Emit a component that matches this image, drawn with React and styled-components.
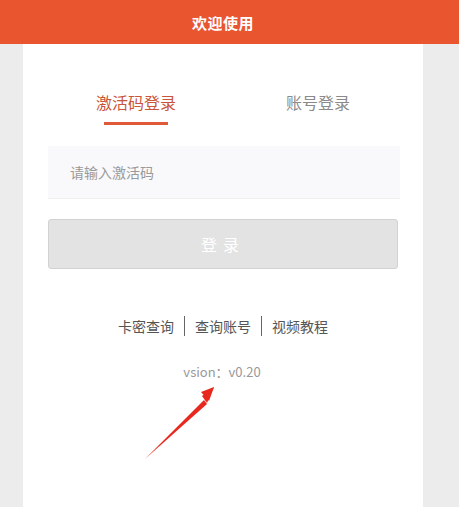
import React from 'react';
import styled, { createGlobalStyle } from 'styled-components';

const Global = createGlobalStyle`
  html, body {
    margin: 0;
    padding: 0;
    background: #ececec;
    font-family: "Noto Sans CJK SC", "Liberation Sans", sans-serif;
  }
`;

const Page = styled.div`
  width: 100%;
  height: 507px;
  display: flex;
  flex-direction: column;
  position: relative;
  overflow: hidden;
`;

const Header = styled.div`
  height: 44px;
  background: #e9552f;
  color: #fff;
  font-size: 15px;
  font-weight: bold;
  display: flex;
  align-items: center;
  justify-content: center;
  padding-right: 13px;
  letter-spacing: 0.5px;
`;

const Card = styled.div`
  flex: 1;
  margin: 0 36px 0 23px;
  background: #fff;
  display: flex;
  flex-direction: column;
  padding: 0 25px;
`;

const Tabs = styled.div`
  display: flex;
  gap: 110px;
  padding-left: 48px;
  margin-top: 44px;
  height: 42px;
`;

const Tab = styled.div`
  width: ${p => (p.active ? '80px' : '64px')};
  display: flex;
  flex-direction: column;
  align-items: center;
  font-size: 16px;
  line-height: 28px;
  white-space: nowrap;
  color: ${p => (p.active ? '#c9553a' : '#8a8a8a')};
  &::after {
    content: '';
    display: block;
    width: 64px;
    height: 3px;
    margin-top: 6px;
    background: ${p => (p.active ? '#e05a3a' : 'transparent')};
  }
`;

const Input = styled.input`
  margin-top: 16px;
  height: 53px;
  box-sizing: border-box;
  width: 352px;
  border: none;
  border-bottom: 1px solid #f0f0f0;
  background: #f9f9fb;
  padding: 0 22px;
  font-family: inherit;
  font-size: 14px;
  outline: none;
  &::placeholder {
    color: #9a9a9a;
  }
`;

const Button = styled.button`
  margin-top: 20px;
  height: 50px;
  width: 350px;
  background: #e3e3e3;
  border: 1px solid #d2d2d2;
  border-radius: 3px;
  color: #fff;
  font-family: inherit;
  font-size: 16px;
  letter-spacing: 6px;
`;

const Links = styled.div`
  margin-top: 47px;
  display: flex;
  justify-content: center;
  align-items: center;
`;

const LinkItem = styled.span`
  font-size: 14px;
  color: #555;
  padding: 0 10px;
  line-height: 20px;
  border-left: ${p => (p.first ? 'none' : '1px solid #666')};
`;

const Version = styled.div`
  margin-top: 26px;
  text-align: center;
  font-size: 13px;
  color: #999;
  margin-left: -2px;
`;

const Arrow = styled.svg`
  position: absolute;
  left: 140px;
  top: 380px;
`;

export default function App() {
  return (
    <Page>
      <Global />
      <Header>欢迎使用</Header>
      <Card>
        <Tabs>
          <Tab active>激活码登录</Tab>
          <Tab>账号登录</Tab>
        </Tabs>
        <Input placeholder="请输入激活码" />
        <Button>登录</Button>
        <Links>
          <LinkItem first>卡密查询</LinkItem>
          <LinkItem>查询账号</LinkItem>
          <LinkItem>视频教程</LinkItem>
        </Links>
        <Version>vsion：v0.20</Version>
      </Card>
      <Arrow width="90" height="90" viewBox="0 0 90 90">
        <path d="M5 79 L64 20 L67 24 Z" fill="#e8281e" />
        <path d="M74 7 L61 12 L69 21 Z" fill="#e8281e" />
        <path d="M62 16 L74 7 L67 23 Z" fill="#e8281e" />
      </Arrow>
    </Page>
  );
}
